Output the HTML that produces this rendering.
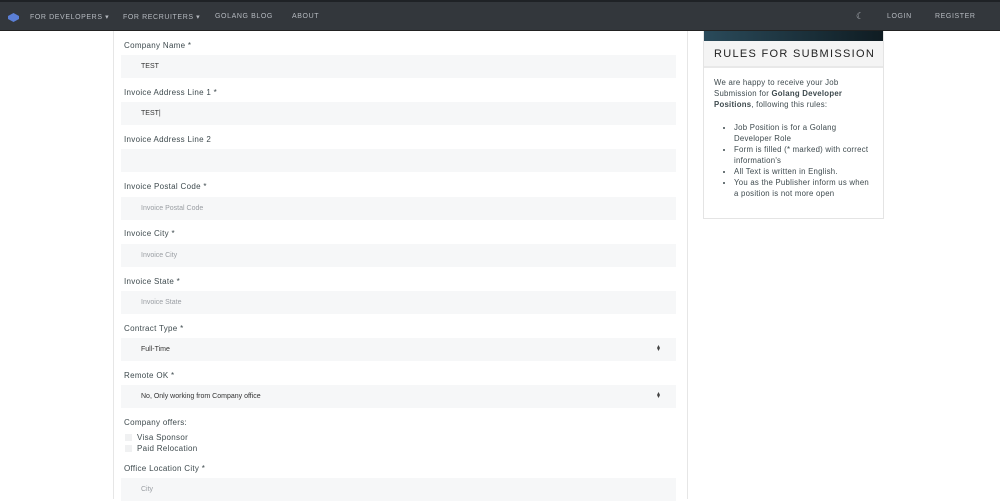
<!DOCTYPE html>
<html><head><style>
*{margin:0;padding:0;box-sizing:border-box}
body{width:1000px;height:499px;overflow:hidden;background:#fff;font-family:"Liberation Sans",sans-serif;position:relative}
.nav{position:absolute;left:0;top:0;width:1000px;height:31px;background:#33373c;border-top:2px solid #1f2226;border-bottom:1px solid #222}
.nav span{position:absolute;top:11px;font-size:7px;letter-spacing:.6px;color:#b6bac0}
.vl{position:absolute;top:31px;bottom:0;width:1px;background:#e6e6e6}
.lab{position:absolute;left:124px;font-size:8px;color:#3e4a4e;letter-spacing:.3px}
.in{position:absolute;left:121px;width:555px;height:23px;background:#f6f7f8;font-size:7px;color:#333;padding-left:20px;line-height:23px}
.ph{color:#9a9ea3}
.arr{position:absolute;right:16px;top:8px;font-size:6px;line-height:3px;color:#444}
.cb{position:absolute;left:125px;width:7px;height:7px;background:#f0f1f2}
.t{position:absolute;left:137px;font-size:8px;color:#3e4a4e;letter-spacing:.3px}
.card{position:absolute;left:703px;top:31px;width:181px;height:188px;border:1px solid #e4e4e4;border-top:none}
.card .bar{height:10px;background:linear-gradient(90deg,#2a4a5a,#0f1c22)}
.card .hd{height:27px;background:#f4f4f4;border-bottom:2px solid #e8e8e8;font-size:11px;letter-spacing:1.3px;color:#222;padding:7px 0 0 10px;white-space:nowrap}
.card .bd{font-size:7.8px;color:#3e4a4e;line-height:11px;padding:9px 10px;letter-spacing:.25px}
.card ul{margin:12px 0 0 20px}
</style></head><body>
<div class="nav">
<svg style="position:absolute;left:8px;top:11px" width="11" height="9"><path d="M5.5 0L11 3 11 6 5.5 9 0 6 0 3Z" fill="#5b7fd6"/></svg>
<span style="left:30px">FOR DEVELOPERS ▾</span>
<span style="left:123px">FOR RECRUITERS ▾</span>
<span style="left:215px">GOLANG BLOG</span>
<span style="left:292px">ABOUT</span>
<span style="left:856px;top:9px;font-size:9px">☾</span>
<span style="left:887px">LOGIN</span>
<span style="left:935px">REGISTER</span>
</div>
<div class="vl" style="left:113px"></div>
<div class="vl" style="left:687px"></div>
<div class="lab" style="top:41px">Company Name *</div>
<div class="in" style="top:55px">TEST</div>
<div class="lab" style="top:88px">Invoice Address Line 1 *</div>
<div class="in" style="top:102px">TEST|</div>
<div class="lab" style="top:135px">Invoice Address Line 2</div>
<div class="in" style="top:149px"></div>
<div class="lab" style="top:182px">Invoice Postal Code *</div>
<div class="in ph" style="top:197px">Invoice Postal Code</div>
<div class="lab" style="top:229px">Invoice City *</div>
<div class="in ph" style="top:244px">Invoice City</div>
<div class="lab" style="top:277px">Invoice State *</div>
<div class="in ph" style="top:291px">Invoice State</div>
<div class="lab" style="top:324px">Contract Type *</div>
<div class="in" style="top:338px">Full-Time<div class="arr">▴<br>▾</div></div>
<div class="lab" style="top:371px">Remote OK *</div>
<div class="in" style="top:385px">No, Only working from Company office<div class="arr">▴<br>▾</div></div>
<div class="lab" style="top:418px">Company offers:</div>
<div class="cb" style="top:434px"></div><div class="t" style="top:433px">Visa Sponsor</div>
<div class="cb" style="top:445px"></div><div class="t" style="top:444px">Paid Relocation</div>
<div class="lab" style="top:464px">Office Location City *</div>
<div class="in ph" style="top:478px">City</div>
<div class="card">
<div class="bar"></div>
<div class="hd">RULES FOR SUBMISSION</div>
<div class="bd">We are happy to receive your Job Submission for <b>Golang Developer Positions</b>, following this rules:
<ul>
<li>Job Position is for a Golang Developer Role</li>
<li>Form is filled (* marked) with correct information's</li>
<li>All Text is written in English.</li>
<li>You as the Publisher inform us when a position is not more open</li>
</ul></div>
</div>
</body></html>
